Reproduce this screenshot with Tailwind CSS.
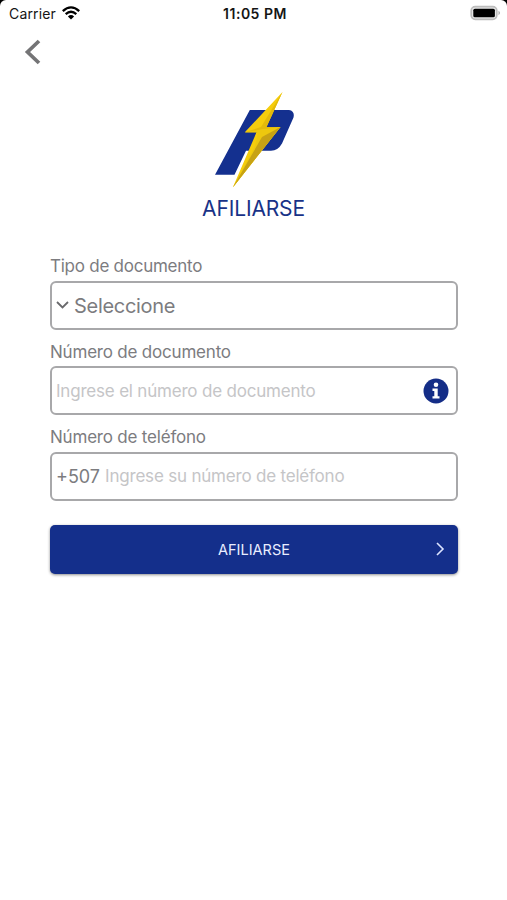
<!DOCTYPE html>
<html lang="es">
<head>
<meta charset="utf-8">
<title>Afiliarse</title>
<script src="https://cdn.jsdelivr.net/npm/@tailwindcss/browser@4"></script>
</head>
<body class="bg-black">
<main class="h-[900px] w-[507px] overflow-hidden rounded-t-[6px] bg-white font-['Inter','Liberation_Sans',sans-serif] whitespace-nowrap text-[#7c7c7f]">
  <header class="grid h-7 grid-cols-3 items-center pr-[6px] pl-[9px] text-[#151515]">
    <div class="flex items-center gap-[6px]">
      <span class="text-[14px] leading-none tracking-[0.15px]">Carrier</span>
      <svg class="mb-[2px] h-[14px] w-[18px]" viewBox="0 0 18 14" fill="none" stroke="#000" stroke-width="2.3">
        <path d="M.8 5.2Q9-2.4 17.2 5.2"/><path d="M3.7 8.1Q9 3.3 14.3 8.1"/><path d="M9 13.6 5.9 10.4Q9 7.6 12.1 10.4Z" fill="#000" stroke="none"/>
      </svg>
    </div>
    <span class="text-center text-[14px] leading-none font-semibold tracking-[0.5px]">11:05 PM</span>
    <svg class="mb-[2px] h-[16px] w-[31px] justify-self-end" viewBox="0 0 31 16">
      <rect x="1.2" y="1.7" width="25.6" height="12.6" rx="4" fill="#e8e8e8" stroke="#bdbdbd" stroke-width="1.7"/>
      <rect x="3.3" y="3.7" width="21.6" height="8.6" rx="1.6" fill="#000"/>
      <path d="M28.5 5.8q3 2.2 0 4.4z" fill="#aaa"/>
    </svg>
  </header>
  <nav class="pt-[11px] pl-6">
    <svg class="h-[26px] w-[18px]" viewBox="0 0 18 26" fill="none" stroke="#747476" stroke-width="3.7"><path d="M15 2 3.5 13 15 24"/></svg>
  </nav>
  <section class="flex flex-col items-center pt-[26px]">
    <svg class="h-[98px] w-[82px]" viewBox="0 0 82 98">
      <path d="M36.8 19H76q6 1 4.500 7.500L69 52.500Q65 59.700 58 59.700H33L21.500 83.700H2z" fill="#14308f"/>
      <path d="M69.500 1 31.800 41.300H43.500L19.800 96.500 67.500 36H53.500z" fill="#f5cd0c"/>
      <path d="M69.500 1 48 36 31.800 41.300H45L67.500 36H53.500z" fill="#e3ba0b"/>
      <path d="M31.800 41.300H45L42 55 19.800 96.500 67.500 36 50 38z" fill="#edc80e"/>
      <path d="M67.500 36 49 46 19.800 96.500z" fill="#c7a214"/>
    </svg>
    <h1 class="mt-[6px] text-[21px] leading-7 tracking-[-0.15px] text-[#183287]">AFILIARSE</h1>
  </section>
  <form class="mt-[29px] pr-[49px] pl-[50px]">
    <label class="block h-[28.5px] text-[17px] leading-[28px] tracking-[-0.25px]">Tipo de documento</label>
    <div class="flex h-[49px] items-center rounded-[6px] border-2 border-[#a8a8aa] pl-[4px]">
      <svg class="mr-[5px] h-[8px] w-[13px]" viewBox="0 0 13 8" fill="none" stroke="#69696c" stroke-width="1.8"><path d="m1 1 5.500 5.500L12 1"/></svg>
      <span class="pt-[2px] text-[20px] tracking-[-0.3px]">Seleccione</span>
    </div>
    <label class="mt-[8px] block h-[28.5px] text-[17px] leading-[28px] tracking-[-0.2px]">Número de documento</label>
    <div class="flex h-[49px] items-center justify-between rounded-[6px] border-2 border-[#a8a8aa] pr-[7px] pl-[4px]">
      <span class="pt-[2px] text-[17px] tracking-[-0.2px] text-[#c5c5c7]">Ingrese el número de documento</span>
      <svg class="h-[26px] w-[26px]" viewBox="0 0 26 26"><circle cx="13" cy="13" r="12.500" fill="#142d87"/><circle cx="13" cy="6.800" r="2.300" fill="#fff"/><path d="M9.500 10.500h5.200v7.700h1.800v2.400H9.500v-2.400h1.800v-5.300H9.500z" fill="#fff"/></svg>
    </div>
    <label class="mt-[8px] block h-[28.5px] text-[17px] leading-[29px] tracking-[-0.2px]">Número de teléfono</label>
    <div class="flex h-[49px] items-center gap-[5px] rounded-[6px] border-2 border-[#a8a8aa] pl-[4px]">
      <span class="text-[18px]">+507</span><span class="pt-[2px] text-[17px] tracking-[-0.2px] text-[#c5c5c7]">Ingrese su número de teléfono</span>
    </div>
    <button type="button" class="mt-[24px] grid h-[49px] w-full grid-cols-[1fr_auto_1fr] items-center rounded-[5px] bg-[#142f8b] px-[13px] text-white shadow-[0_1px_3px_rgba(0,0,0,0.45)]">
      <span class="col-start-2 pt-[2px] text-[14.5px] text-[#e9edff]">AFILIARSE</span>
      <svg class="h-[14px] w-[10px] justify-self-end" viewBox="0 0 10 14" fill="none" stroke="#dce4ff" stroke-width="1.6"><path d="m2 1 6 6-6 6"/></svg>
    </button>
  </form>
</main>
</body>
</html>
